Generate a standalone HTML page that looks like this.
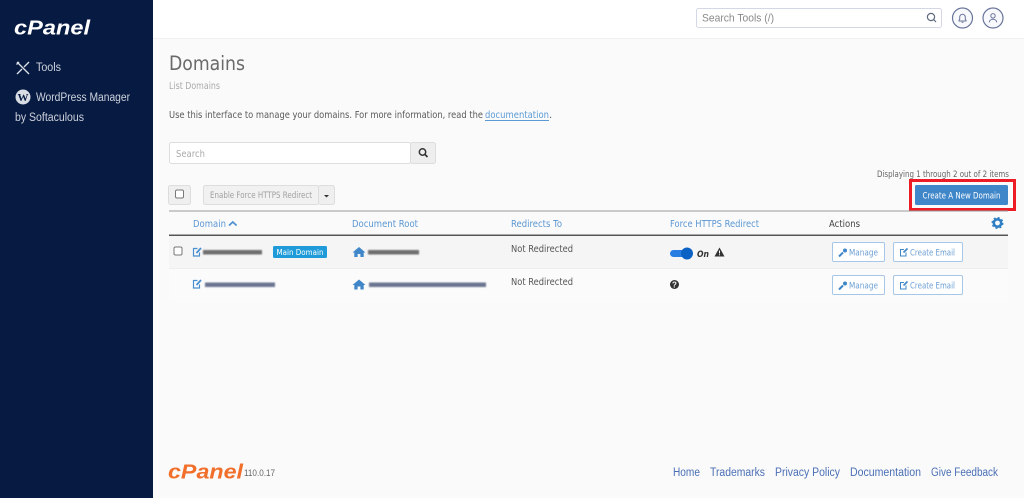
<!DOCTYPE html>
<html lang="en"><head><meta charset="utf-8"><title>Domains - cPanel</title>
<style>
html,body{margin:0;padding:0;width:1024px;height:498px;overflow:hidden;background:#fafafa}
svg{display:block}
text{font-family:"DejaVu Sans",sans-serif;font-size:10px;fill:#555;filter:blur(.2px)}
text.l{font-family:"Liberation Sans",sans-serif}
</style></head><body>
<svg width="1024" height="498" viewBox="0 0 1024 498" xmlns="http://www.w3.org/2000/svg">
<defs><filter id="b" x="-10%" y="-100%" width="120%" height="300%"><feGaussianBlur stdDeviation="0.9"/></filter></defs>
<rect width="1024" height="498" fill="#fafafa"/>
<!-- Header -->
<rect x="153" width="871" height="38" fill="#fff"/>
<rect x="153" y="38" width="871" height="1" fill="#f0f0f1"/>
<rect x="696.500" y="8.500" width="245" height="19" rx="2" fill="#fff" stroke="#d3d8e4"/>
<text class="l" x="702" y="21.500" style="font-size:11px;fill:#8a8a8a" textLength="72" lengthAdjust="spacingAndGlyphs">Search Tools (/)</text>
<circle cx="931" cy="17" r="3.600" fill="none" stroke="#5f6a80" stroke-width="1.200"/><path d="M933.700 19.700l2.300 2.300" stroke="#5f6a80" stroke-width="1.200"/>
<circle cx="962.500" cy="18" r="10" fill="#f8f9fc" stroke="#69759a" stroke-width="1.200"/>
<path d="M959 21v-.7l.7-1v-2.200a2.800 2.800 0 0 1 5.600 0v2.200l.7 1v.7zM961.600 22.200h1.800" fill="none" stroke="#69759a"/>
<circle cx="993" cy="18" r="10" fill="#f8f9fc" stroke="#69759a" stroke-width="1.200"/>
<circle cx="993" cy="15.800" r="2.200" fill="none" stroke="#69759a"/><path d="M989.300 22.300c.4-4 7-4 7.400 0" fill="none" stroke="#69759a"/>

<!-- Sidebar -->
<rect width="153" height="498" fill="#071a42"/>
<text class="l" x="14" y="34.500" style="font-size:20px;font-weight:bold;font-style:italic;fill:#fff" textLength="76" lengthAdjust="spacingAndGlyphs">cPanel</text>
<path d="M17 62l12 12M29 62l-5 5M22 69l-5 5M16.500 64.500l2.500-2.500" fill="none" stroke="#dfe3ea" stroke-width="1.300"/>
<text class="l" x="36" y="71" style="font-size:11.500px;fill:#cdd2dc" textLength="25" lengthAdjust="spacingAndGlyphs">Tools</text>
<circle cx="23" cy="97" r="7.500" fill="#d8dce4"/>
<text class="l" x="23" y="101" text-anchor="middle" style="font-size:11px;font-weight:bold;font-family:'Liberation Serif',serif;fill:#081b43">W</text>
<text class="l" x="36" y="101" style="font-size:11.500px;fill:#cdd2dc" textLength="94" lengthAdjust="spacingAndGlyphs">WordPress Manager</text>
<text class="l" x="15" y="121" style="font-size:11.500px;fill:#cdd2dc" textLength="69" lengthAdjust="spacingAndGlyphs">by Softaculous</text>

<!-- Title -->
<text x="169" y="70" style="font-size:19.500px;fill:#6a6a6a" textLength="76" lengthAdjust="spacingAndGlyphs">Domains</text>
<text x="169" y="89" style="font-size:9.500px;fill:#aaa" textLength="51" lengthAdjust="spacingAndGlyphs">List Domains</text>
<text x="169" y="118" style="font-size:10px;fill:#5a5a5a" textLength="314" lengthAdjust="spacingAndGlyphs">Use this interface to manage your domains. For more information, read the</text>
<text x="485" y="118" style="font-size:10px;fill:#5b9bd5" textLength="64" lengthAdjust="spacingAndGlyphs">documentation</text>
<rect x="485" y="120" width="64" height="1" fill="#5b9bd5"/>
<text x="549" y="118" style="font-size:10px;fill:#555">.</text>

<!-- Search -->
<rect x="169.500" y="142.500" width="241" height="21" rx="2" fill="#fff" stroke="#ddd"/>
<text x="176" y="157" style="font-size:9.500px;fill:#aaa" textLength="29" lengthAdjust="spacingAndGlyphs">Search</text>
<rect x="410.500" y="142.500" width="25" height="21" rx="2" fill="#eee" stroke="#ddd"/>
<circle cx="422.500" cy="152" r="3.200" fill="none" stroke="#333" stroke-width="1.500"/><path d="M425 154.500l2.500 2.500" stroke="#333" stroke-width="1.700"/>

<text x="1009" y="177" text-anchor="end" style="font-size:9px;fill:#666" textLength="132" lengthAdjust="spacingAndGlyphs">Displaying 1 through 2 out of 2 items</text>

<!-- Toolbar -->
<rect x="168.500" y="185.500" width="22" height="19" rx="2" fill="#efefef" stroke="#ddd"/>
<rect x="175.500" y="190" width="8" height="8" rx="1.500" fill="#fff" stroke="#777"/>
<rect x="203.500" y="185.500" width="115" height="19" rx="2" fill="#f1f1f1" stroke="#ddd"/>
<text x="210" y="198" style="font-size:9px;fill:#a0a0a0" textLength="102" lengthAdjust="spacingAndGlyphs">Enable Force HTTPS Redirect</text>
<rect x="318.500" y="185.500" width="16" height="19" rx="2" fill="#efefef" stroke="#ddd"/>
<path d="M324 195h5l-2.500 2.500z" fill="#333"/>

<!-- Create button -->
<rect x="910.500" y="180.500" width="104" height="29" fill="none" stroke="#ed1c24" stroke-width="3"/>
<rect x="915" y="185" width="93" height="20" rx="1.500" fill="#3f87c9"/>
<text x="922.500" y="198.500" style="font-size:9px;fill:#fff" textLength="78" lengthAdjust="spacingAndGlyphs">Create A New Domain</text>

<!-- Table -->
<rect x="169" y="236" width="839" height="33" fill="#f5f5f5"/>
<rect x="169" y="269" width="839" height="33" fill="#fbfbfb"/>
<rect x="169" y="268" width="839" height="1" fill="#eee"/>
<rect x="169" y="210.500" width="839" height="1" fill="#999"/>
<rect x="169" y="234.500" width="839" height="1.500" fill="#555"/>
<text x="193" y="227" style="font-size:10px;fill:#5b97d2" textLength="33" lengthAdjust="spacingAndGlyphs">Domain</text>
<path d="M229 225.500l3.800-3.500 3.800 3.500" fill="none" stroke="#4a8fd0" stroke-width="1.600"/>
<text x="352" y="227" style="font-size:10px;fill:#5b97d2" textLength="66" lengthAdjust="spacingAndGlyphs">Document Root</text>
<text x="511" y="227" style="font-size:10px;fill:#5b97d2" textLength="51" lengthAdjust="spacingAndGlyphs">Redirects To</text>
<text x="670" y="227" style="font-size:10px;fill:#5b97d2" textLength="89" lengthAdjust="spacingAndGlyphs">Force HTTPS Redirect</text>
<text x="829" y="227" style="font-size:10px;fill:#444" textLength="31" lengthAdjust="spacingAndGlyphs">Actions</text>
<circle cx="997.500" cy="223" r="3.700" fill="none" stroke="#2f7fc4" stroke-width="2.600"/>
<circle cx="997.500" cy="223" r="5.300" fill="none" stroke="#2f7fc4" stroke-width="1.400" stroke-dasharray="2 2.160"/>

<!-- Row 1 -->
<rect x="174" y="247" width="8" height="8" rx="1.500" fill="#fff" stroke="#777"/>
<g fill="none" stroke="#4a8fd0" stroke-width="1.200"><path d="M199.500 252.500v3.500h-6v-7.500h4"/><path d="M196.500 253l4.500-5" stroke-width="1.800"/></g>
<rect x="203" y="250" width="59" height="4.500" fill="#6e6e6e" filter="url(#b)"/>
<rect x="273" y="246" width="54" height="12" rx="1.500" fill="#1e9bd8"/>
<text x="276.500" y="255" style="font-size:8px;fill:#fff" textLength="47" lengthAdjust="spacingAndGlyphs">Main Domain</text>
<path d="M352.500 252.500l6.500-5.500 6.500 5.500h-1.800v4.500h-3.300v-3h-2.800v3h-3.300v-4.500z" fill="#3f87c9"/>
<rect x="368" y="250" width="51" height="4.500" fill="#6e6e6e" filter="url(#b)"/>
<text x="511" y="252" style="font-size:10px;fill:#555" textLength="62" lengthAdjust="spacingAndGlyphs">Not Redirected</text>
<rect x="670" y="250" width="21" height="7" rx="3.500" fill="#2a7de1"/><circle cx="687" cy="253.500" r="6" fill="#0b62c4"/>
<text x="697" y="257" style="font-size:9px;font-weight:bold;font-style:italic;fill:#333" textLength="12" lengthAdjust="spacingAndGlyphs">On</text>
<path d="M719.500 247.500l5 9h-10z" fill="#333"/><rect x="719" y="250.500" width="1" height="3" fill="#fff"/><rect x="719" y="254.300" width="1" height="1" fill="#fff"/>
<rect x="832.500" y="242.500" width="52" height="19" rx="1.500" fill="#fff" stroke="#a6c7e8"/>
<path d="M839 256.500l4-4" stroke="#3f87c9" stroke-width="2"/><circle cx="845" cy="250.500" r="2" fill="#3f87c9"/>
<text x="849" y="255.500" style="font-size:9px;fill:#6b9fd4" textLength="29" lengthAdjust="spacingAndGlyphs">Manage</text>
<rect x="893.500" y="242.500" width="69" height="19" rx="1.500" fill="#fff" stroke="#a6c7e8"/>
<path d="M906 252.500v3.500h-5.500v-6.500h3.500" fill="none" stroke="#3f87c9"/><path d="M903.500 252.500l4-4" stroke="#3f87c9" stroke-width="1.600"/>
<text x="910" y="255.500" style="font-size:9px;fill:#6b9fd4" textLength="45" lengthAdjust="spacingAndGlyphs">Create Email</text>

<!-- Row 2 -->
<g fill="none" stroke="#4a8fd0" stroke-width="1.200"><path d="M199.500 284.500v3.500h-6v-7.500h4"/><path d="M196.500 285l4.500-5" stroke-width="1.800"/></g>
<rect x="205" y="282.500" width="70" height="4.500" fill="#6b7590" filter="url(#b)"/>
<path d="M352.500 285l6.500-5.500 6.500 5.500h-1.800v4.500h-3.300v-3h-2.800v3h-3.300v-4.500z" fill="#3f87c9"/>
<rect x="369" y="282.500" width="117" height="4.500" fill="#6b7590" filter="url(#b)"/>
<text x="511" y="285" style="font-size:10px;fill:#555" textLength="62" lengthAdjust="spacingAndGlyphs">Not Redirected</text>
<circle cx="674.500" cy="284.500" r="4.500" fill="#333"/>
<text class="l" x="674.500" y="287.500" text-anchor="middle" style="font-size:8px;font-weight:bold;fill:#fff">?</text>
<rect x="832.500" y="275.500" width="52" height="19" rx="1.500" fill="#fff" stroke="#a6c7e8"/>
<path d="M839 289.500l4-4" stroke="#3f87c9" stroke-width="2"/><circle cx="845" cy="283.500" r="2" fill="#3f87c9"/>
<text x="849" y="288.500" style="font-size:9px;fill:#6b9fd4" textLength="29" lengthAdjust="spacingAndGlyphs">Manage</text>
<rect x="893.500" y="275.500" width="69" height="19" rx="1.500" fill="#fff" stroke="#a6c7e8"/>
<path d="M906 285.500v3.500h-5.500v-6.500h3.500" fill="none" stroke="#3f87c9"/><path d="M903.500 285.500l4-4" stroke="#3f87c9" stroke-width="1.600"/>
<text x="910" y="288.500" style="font-size:9px;fill:#6b9fd4" textLength="45" lengthAdjust="spacingAndGlyphs">Create Email</text>

<!-- Footer -->
<text class="l" x="168" y="478.500" style="font-size:20px;font-weight:bold;font-style:italic;fill:#f26f2b" textLength="75" lengthAdjust="spacingAndGlyphs">cPanel</text>
<text class="l" x="244" y="476" style="font-size:9px;fill:#666" textLength="31" lengthAdjust="spacingAndGlyphs">110.0.17</text>
<text class="l" x="673" y="476" style="font-size:11.500px;fill:#4a6fb5" textLength="27" lengthAdjust="spacingAndGlyphs">Home</text>
<text class="l" x="710" y="476" style="font-size:11.500px;fill:#4a6fb5" textLength="55" lengthAdjust="spacingAndGlyphs">Trademarks</text>
<text class="l" x="775" y="476" style="font-size:11.500px;fill:#4a6fb5" textLength="65" lengthAdjust="spacingAndGlyphs">Privacy Policy</text>
<text class="l" x="850" y="476" style="font-size:11.500px;fill:#4a6fb5" textLength="71" lengthAdjust="spacingAndGlyphs">Documentation</text>
<text class="l" x="931" y="476" style="font-size:11.500px;fill:#4a6fb5" textLength="67" lengthAdjust="spacingAndGlyphs">Give Feedback</text>
</svg>
</body></html>
